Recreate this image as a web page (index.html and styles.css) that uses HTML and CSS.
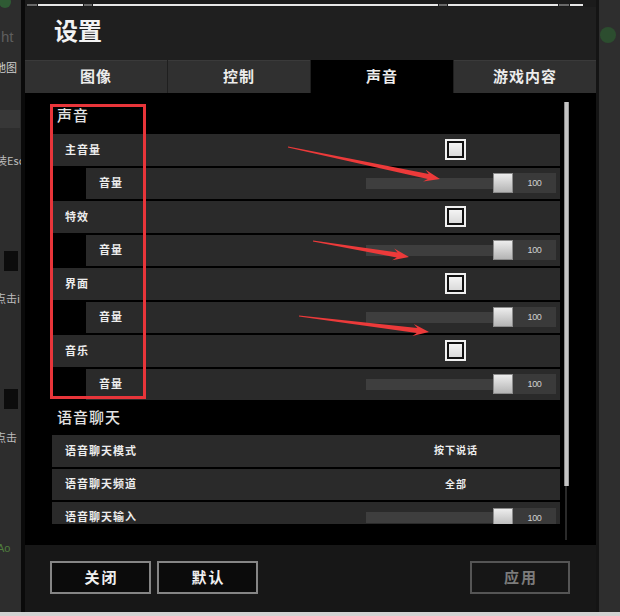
FILE: index.html
```html
<!DOCTYPE html>
<html lang="zh-CN">
<head>
<meta charset="utf-8">
<title>设置</title>
<link rel="stylesheet" href="styles.css">
</head>
<body>
<div class="screen">
  <aside class="side side-left">
    <span class="dot-green"></span>
    <span class="frag frag-ht">ht</span>
    <span class="frag frag-map">地图</span>
    <span class="blk blk-gray"></span>
    <span class="frag frag-esc">装Esc</span>
    <span class="blk blk-black"></span>
    <span class="frag frag-click">点击i</span>
    <span class="blk blk-black blk-2"></span>
    <span class="frag frag-click2">点击</span>
    <span class="frag frag-green">Ao</span>
  </aside>

  <div class="dialog">
    <div class="topline">
      <span class="seg seg-dim w10"></span>
      <span class="seg w45"></span>
      <span class="seg seg-dim w8"></span>
      <span class="seg w345"></span>
      <span class="seg seg-dim w8"></span>
      <span class="seg w115"></span>
      <span class="seg seg-dim w10"></span>
      <span class="seg w13"></span>
    </div>
    <header class="head"><h1 class="title">设置</h1></header>
    <nav class="tabs">
      <div class="tab">图像</div>
      <div class="tab">控制</div>
      <div class="tab active">声音</div>
      <div class="tab">游戏内容</div>
    </nav>
    <main class="content">
      <div class="list">
        <h2 class="section">声音</h2>
        <div class="rows">
          <div class="row"><span class="label">主音量</span><span class="check"><span class="check-in"></span></span></div>
          <div class="row sub"><span class="label">音量</span><div class="slider"><span class="track"></span><span class="thumb"></span><span class="value">100</span></div></div>
          <div class="row"><span class="label">特效</span><span class="check"><span class="check-in"></span></span></div>
          <div class="row sub"><span class="label">音量</span><div class="slider"><span class="track"></span><span class="thumb"></span><span class="value">100</span></div></div>
          <div class="row"><span class="label">界面</span><span class="check"><span class="check-in"></span></span></div>
          <div class="row sub"><span class="label">音量</span><div class="slider"><span class="track"></span><span class="thumb"></span><span class="value">100</span></div></div>
          <div class="row"><span class="label">音乐</span><span class="check"><span class="check-in"></span></span></div>
          <div class="row sub"><span class="label">音量</span><div class="slider"><span class="track"></span><span class="thumb"></span><span class="value">100</span></div></div>
        </div>
        <h2 class="section section-voice">语音聊天</h2>
        <div class="rows">
          <div class="row"><span class="label">语音聊天模式</span><span class="val">按下说话</span></div>
          <div class="row"><span class="label">语音聊天频道</span><span class="val">全部</span></div>
          <div class="row row-cut"><span class="label">语音聊天输入</span><div class="slider"><span class="track"></span><span class="thumb"></span><span class="value">100</span></div></div>
        </div>
      </div>
      <div class="scrollbar"><div class="sb-thumb"></div></div>
    </main>
    <footer class="foot">
      <button class="btn">关闭</button>
      <button class="btn">默认</button>
      <span class="spacer"></span>
      <button class="btn btn-disabled">应用</button>
    </footer>
  </div>

  <aside class="side side-right">
    <span class="dot-green dot-right"></span>
  </aside>
</div>
<div class="bottomstrip"></div>

<div class="redbox"></div>
<svg class="annot" width="620" height="616" viewBox="0 0 620 616" xmlns="http://www.w3.org/2000/svg">
  <polygon fill="#ec3a3a" points="288.1,146.5 428.77,174.08 425.58,169.83 440,179 423.10,181.57 427.75,178.98 287.9,147.5"/>
  <polygon fill="#ec3a3a" points="313.1,240.5 397.57,252.56 394.21,248.45 409,257 392.23,260.29 396.75,257.50 312.9,241.5"/>
  <polygon fill="#ec3a3a" points="299.1,315.5 417.40,328.05 413.85,324.09 429,332 412.39,336.0 416.78,333.01 298.9,316.5"/>
</svg>
</body>
</html>
```

FILE: styles.css
```css
* { box-sizing: border-box; margin: 0; padding: 0; }

html, body {
  width: 620px;
  height: 616px;
  overflow: hidden;
  background: #2b2b2b;
  font-family: "Noto Sans CJK SC", "Noto Sans", sans-serif;
}

body { position: relative; }

.screen {
  display: flex;
  height: 612px;
}

/* background page fragments */
.side {
  width: 21px;
  flex: none;
  background: #2d2d2d;
  overflow: hidden;
  display: flex;
  flex-direction: column;
}

.dot-green {
  display: block;
  width: 12px;
  height: 12px;
  border-radius: 50%;
  background: #2f5a34;
  margin: -4px 0 0 -1px;
}

.frag {
  display: block;
  white-space: nowrap;
  font-size: 11px;
  line-height: 14px;
  color: #bdbdbd;
}

.frag-ht {
  font-family: "Liberation Sans", sans-serif;
  font-size: 15px;
  color: #5e5e5e;
  margin: 22px 0 0 1px;
}

.frag-map { margin: 16px 0 0 -5px; color: #d0d0d0; }

.blk { display: block; flex: none; }

.blk-gray {
  height: 18px;
  width: 20px;
  background: #373737;
  margin-top: 36px;
}

.frag-esc { margin: 25px 0 0 -4px; }

.blk-black {
  height: 20px;
  width: 14px;
  background: #0c0c0c;
  margin: 84px 0 0 4px;
}

.frag-click { margin: 20px 0 0 -5px; }

.blk-2 { margin-top: 84px; }

.frag-click2 { margin: 21px 0 0 -5px; }

.frag-green { margin: 97px 0 0 -3px; color: #4f7d3e; font-family: "Liberation Sans", sans-serif; }

.side-right {
  width: 24px;
  border-left: 3px solid #141414;
  background: #2e2e2e;
}

.dot-right {
  width: 16px;
  height: 16px;
  margin: 27px 0 0 1px;
  background: #2c4d2f;
}

/* dialog */
.dialog {
  flex: 1;
  display: flex;
  flex-direction: column;
  border-left: 4px solid #0a0a0a;
  background: #000;
}

.topline {
  height: 7px;
  background: #1b1b1b;
  display: flex;
  align-items: flex-end;
  padding: 0 0 1px 2px;
  gap: 1px;
}

.seg { display: block; height: 2px; background: #e6e6e6; }
.seg-dim { background: #6a6a6a; }
.w10 { width: 10px; }
.w45 { width: 45px; }
.w8 { width: 8px; }
.w345 { width: 345px; }
.w115 { width: 110px; }
.w13 { width: 13px; }

.head {
  height: 53px;
  background: #1f1f1f;
  display: flex;
  align-items: center;
  padding: 0 0 8px 29px;
}

.title {
  font-size: 24px;
  font-weight: 700;
  color: #f2f2f2;
  line-height: 1;
}

.tabs {
  height: 33px;
  display: grid;
  grid-template-columns: repeat(4, 1fr);
  gap: 1px;
  background: #1f1f1f;
}

.tab {
  background: #303030;
  border-top: 1px solid #3a3a3a;
  display: flex;
  align-items: center;
  justify-content: center;
  padding-bottom: 3px;
  font-size: 15px;
  font-weight: 700;
  letter-spacing: 1px;
  color: #ececec;
}

.tab.active { background: #000; border-top-color: #000; }

.content {
  height: 452px;
  background: #000;
  display: flex;
  padding-left: 27px;
}

.list {
  width: 508px;
  height: 431px;
  overflow: hidden;
  flex: none;
}

.section {
  height: 41px;
  padding: 1px 0 0 5px;
  display: flex;
  align-items: center;
  font-size: 15px;
  font-weight: 500;
  letter-spacing: 1px;
  color: #e2e2e2;
}

.section-voice {
  height: 35px;
  padding: 0 0 3px 5px;
}

.rows {
  display: flex;
  flex-direction: column;
  gap: 2px;
}

.row {
  height: 31.5px;
  flex: none;
  background: #2a2a2a;
  display: flex;
  align-items: center;
  padding: 0 0 2px 13px;
}

.row.sub { margin-left: 34px; }

.row-cut { padding-bottom: 4px; }

.label {
  flex: 1;
  font-size: 11px;
  font-weight: 700;
  letter-spacing: 1px;
  color: #ededed;
  white-space: nowrap;
}

.check {
  width: 21px;
  height: 21px;
  border: 2px solid #f0f0f0;
  padding: 2px;
  margin: 2px 94px 0 0;
  background: #111;
}

.check-in {
  display: block;
  width: 100%;
  height: 100%;
  background: linear-gradient(#f4f4f4, #dadada);
}

.slider {
  display: flex;
  align-items: center;
  margin: 2px 4px 0 0;
}

.row-cut .slider { margin-top: 4px; }

.track {
  display: block;
  width: 127px;
  height: 11px;
  background: #3e3e3e;
}

.thumb {
  display: block;
  width: 20px;
  height: 20px;
  background: linear-gradient(#ededed, #b4b4b4);
  border: 1px solid #8c8c8c;
}

.value {
  width: 43px;
  height: 20px;
  background: #3a3a3a;
  display: flex;
  align-items: center;
  justify-content: center;
  font-family: "Liberation Sans", sans-serif;
  font-size: 9px;
  letter-spacing: -0.4px;
  color: #d0d0d0;
}

.val {
  width: 100px;
  margin-right: 54px;
  text-align: center;
  font-size: 10px;
  font-weight: 700;
  letter-spacing: 1px;
  color: #ededed;
}

.scrollbar {
  width: 5px;
  margin: 9px 0 0 4px;
  height: 438px;
  background: linear-gradient(to right, transparent 1px, #2a2a2a 1px, #2a2a2a 3px, transparent 3px);
}

.sb-thumb {
  height: 384px;
  background: #c4c4c4;
  border-left: 1px solid #8a8a8a;
  border-right: 1px solid #9a9a9a;
}

/* footer */
.foot {
  height: 67px;
  background: #171717;
  display: flex;
  align-items: flex-start;
  gap: 6px;
  padding: 16px 26px 0 25px;
}

.spacer { flex: 1; }

.btn {
  width: 101px;
  height: 33px;
  background: #0b0b0b;
  border: 2px solid #858585;
  font-family: "Noto Sans CJK SC", "Noto Sans", sans-serif;
  font-size: 15px;
  font-weight: 700;
  letter-spacing: 2px;
  color: #f0f0f0;
  padding: 0 0 2px 2px;
}

.btn-disabled {
  width: 100px;
  background: #161616;
  border-color: #555;
  color: #7c7c7c;
}

.bottomstrip {
  height: 4px;
  background: #d2d2d2;
}

/* annotations drawn over the screenshot */
.redbox {
  position: absolute;
  left: 50px;
  top: 104px;
  width: 96px;
  height: 295px;
  border: 3px solid #e8353a;
  pointer-events: none;
}

.annot {
  position: absolute;
  left: 0;
  top: 0;
  pointer-events: none;
}
```
